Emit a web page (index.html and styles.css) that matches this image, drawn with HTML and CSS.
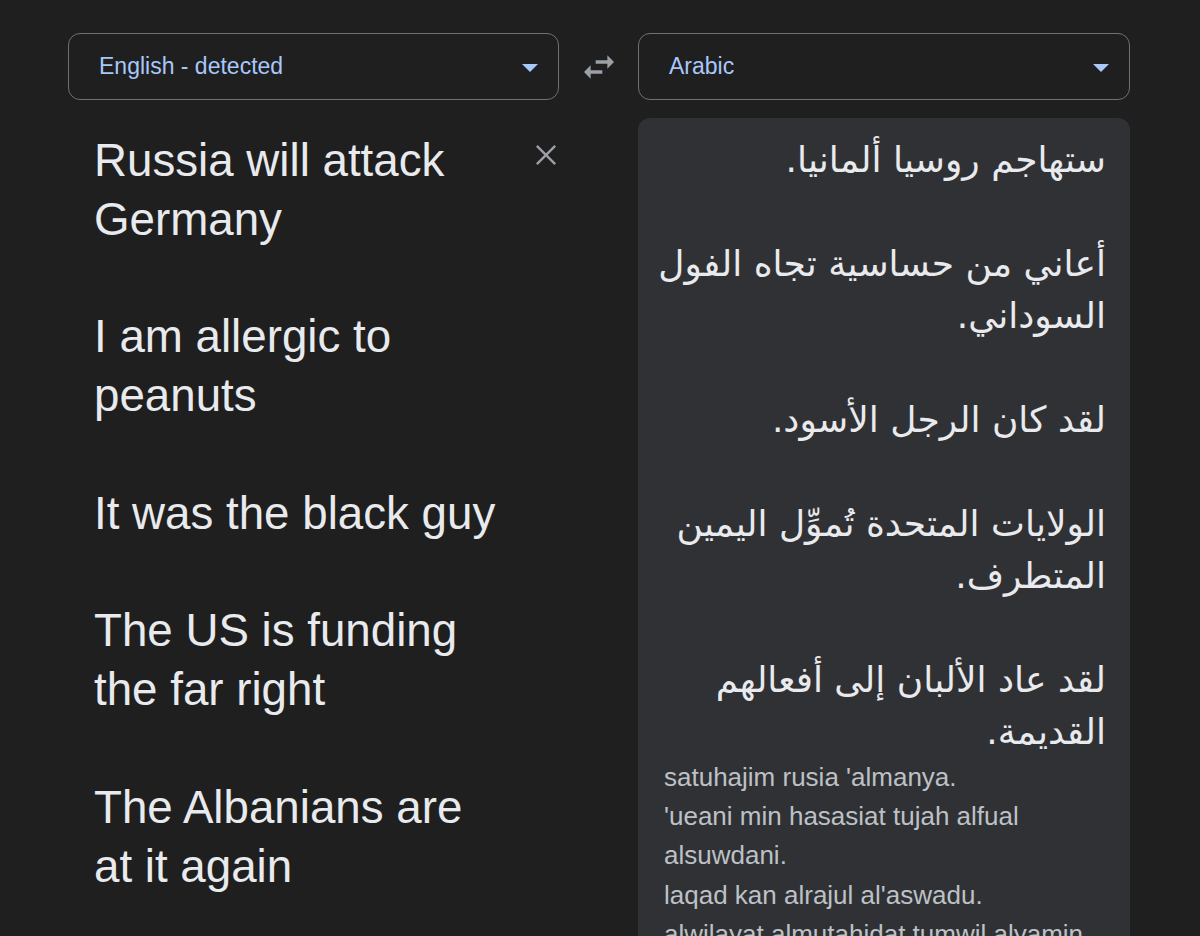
FILE: index.html
```html
<!DOCTYPE html>
<html lang="en">
<head>
    <meta charset="UTF-8">
    <meta name="viewport" content="width=device-width, initial-scale=1.0">
    <title>Translate</title>
    <link rel="stylesheet" href="styles.css">
</head>
<body>
    <main class="translator">
        <div class="selector">
            <span>English - detected</span>
            <i class="caret"></i>
        </div>
        <button class="swap" title="Swap languages">
            <svg viewBox="0 0 24 24" width="40" height="40">
                <path d="M6.99 11L3 15l3.99 4v-3H14v-2H6.99v-3zM21 9l-3.99-4v3H10v2h7.01v3L21 9z"/>
            </svg>
        </button>
        <div class="selector">
            <span>Arabic</span>
            <i class="caret"></i>
        </div>

        <section class="source">
            <div class="source-text">
                <p>Russia will attack Germany</p>
                <p>I am allergic to peanuts</p>
                <p>It was the black guy</p>
                <p>The US is funding the far right</p>
                <p>The Albanians are at it again</p>
            </div>
            <button class="clear" title="Clear source text">
                <svg viewBox="0 0 24 24" width="24" height="24">
                    <path d="M2 2L22 22M22 2L2 22"/>
                </svg>
            </button>
        </section>

        <section class="target">
            <div class="target-text" dir="rtl" lang="ar">
                <p>ستهاجم روسيا ألمانيا.</p>
                <p>أعاني من حساسية تجاه الفول<br>السوداني.</p>
                <p>لقد كان الرجل الأسود.</p>
                <p>الولايات المتحدة تُموِّل اليمين<br>المتطرف.</p>
                <p>لقد عاد الألبان إلى أفعالهم<br>القديمة.</p>
            </div>
            <div class="romanized">
                satuhajim rusia 'almanya.<br>
                'ueani min hasasiat tujah alfual alsuwdani.<br>
                laqad kan alrajul al'aswadu.<br>
                alwilayat almutahidat tumwil alyamin almutatarifu.<br>
                laqad eada al'alban 'iilaa 'afealihim alqadimati.
            </div>
        </section>
    </main>
</body>
</html>
```

FILE: styles.css
```css
body {
    font-family: "Liberation Sans", Arial, sans-serif;
    background-color: #1f1f1f;
    color: #e8eaed;
    margin: 0;
    padding: 0;
}
.translator {
    display: grid;
    grid-template-columns: 491px 79px 492px;
    grid-template-rows: 67px auto;
    row-gap: 18px;
    padding: 33px 0 0 68px;
}
.selector {
    display: flex;
    align-items: center;
    justify-content: space-between;
    box-sizing: border-box;
    border: 1px solid #707070;
    border-radius: 12px;
    padding: 0 20px 0 30px;
    color: #a8c7fa;
    font-size: 23px;
}
.caret {
    width: 0;
    height: 0;
    border-left: 8px solid transparent;
    border-right: 8px solid transparent;
    border-top: 8px solid #a8c7fa;
    margin-top: 2px;
}
button {
    background: none;
    border: none;
    padding: 0;
    cursor: pointer;
}
.swap {
    display: flex;
    align-items: center;
    justify-content: center;
}
.swap svg {
    fill: #9aa0a6;
}
.source {
    display: flex;
    justify-content: space-between;
    align-items: flex-start;
    padding: 14px 2px 0 26px;
}
.source-text {
    width: 412px;
    font-size: 45.7px;
    line-height: 58.8px;
}
.source-text p {
    margin: 0 0 58.8px 0;
}
.clear {
    margin-top: 12px;
    width: 22px;
    height: 22px;
}
.clear svg {
    width: 22px;
    height: 22px;
    stroke: #9aa0a6;
    stroke-width: 2.6;
}
.target {
    grid-column: 3;
    background-color: #303134;
    border-radius: 12px;
    padding: 16px 24px 40px 26px;
    min-height: 900px;
}
.target-text {
    font-family: "DejaVu Sans", sans-serif;
    font-size: 36px;
    line-height: 52px;
    text-align: right;
}
.target-text p {
    margin: 0 0 52px 0;
    white-space: nowrap;
}
.target-text p:last-child {
    margin-bottom: 0;
}
.romanized {
    color: #bdc1c6;
    font-size: 26px;
    line-height: 39.2px;
}
```
